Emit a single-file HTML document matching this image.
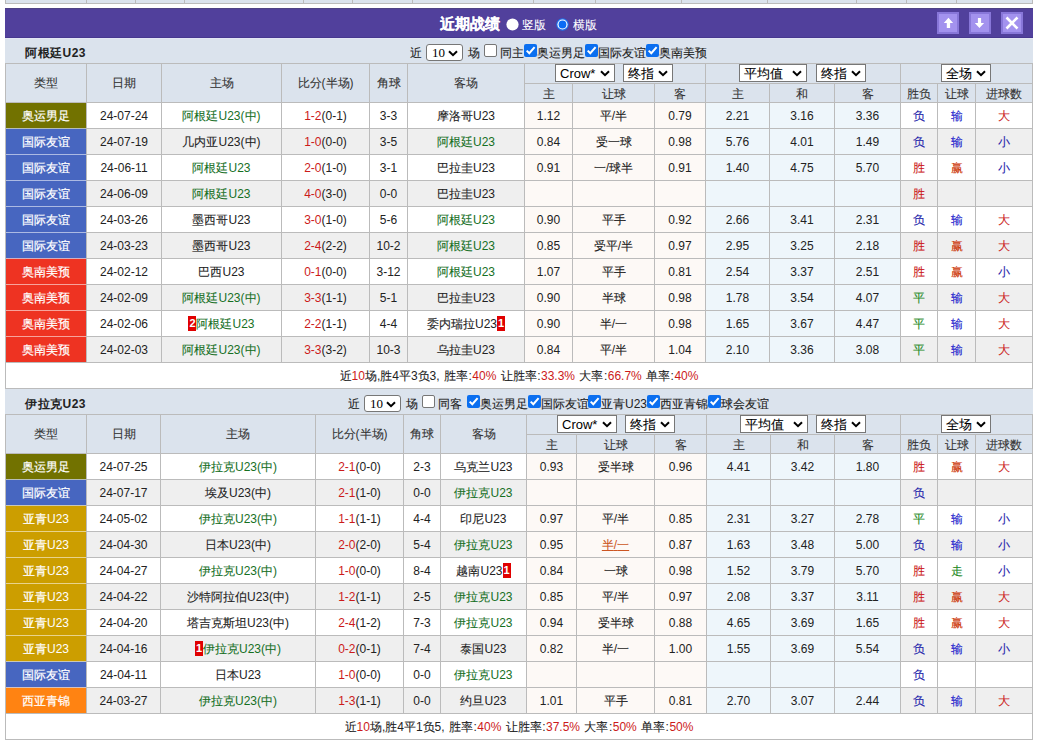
<!DOCTYPE html>
<html><head><meta charset="utf-8"><style>
html,body{margin:0;padding:0;background:#fff;width:1037px;height:743px;overflow:hidden;}
body{font-family:"Liberation Sans",sans-serif;font-size:12px;color:#333;position:relative;}
body>div{position:absolute;white-space:nowrap;overflow:visible;}
div div{position:absolute}
i{font-style:normal;-webkit-text-stroke:0.1px currentColor;}
b.n i{-webkit-text-stroke:0}
b.w{font-weight:normal}
b.t i{-webkit-text-stroke:0.2px #fff}
b.w i{-webkit-text-stroke:0.2px #fff}
.bd{display:inline-block;background:#e00000;color:#fff;width:8px;height:15px;line-height:15px;text-align:center;vertical-align:middle;font-size:11px;font-weight:bold;position:relative;top:-1px}
</style></head><body>
<div style="left:5px;top:0px;width:1028px;height:3px;background:#dbe3ed"></div>
<div style="left:5px;top:3px;width:1028px;height:1px;background:#bbbbbb"></div>
<div style="left:5px;top:0px;width:1px;height:4px;background:#bbbbbb"></div>
<div style="left:86px;top:0px;width:1px;height:4px;background:#bbbbbb"></div>
<div style="left:135px;top:0px;width:1px;height:4px;background:#bbbbbb"></div>
<div style="left:184px;top:0px;width:1px;height:4px;background:#bbbbbb"></div>
<div style="left:303px;top:0px;width:1px;height:4px;background:#bbbbbb"></div>
<div style="left:352px;top:0px;width:1px;height:4px;background:#bbbbbb"></div>
<div style="left:412px;top:0px;width:1px;height:4px;background:#bbbbbb"></div>
<div style="left:533px;top:0px;width:1px;height:4px;background:#bbbbbb"></div>
<div style="left:595px;top:0px;width:1px;height:4px;background:#bbbbbb"></div>
<div style="left:681px;top:0px;width:1px;height:4px;background:#bbbbbb"></div>
<div style="left:767px;top:0px;width:1px;height:4px;background:#bbbbbb"></div>
<div style="left:856px;top:0px;width:1px;height:4px;background:#bbbbbb"></div>
<div style="left:906px;top:0px;width:1px;height:4px;background:#bbbbbb"></div>
<div style="left:956px;top:0px;width:1px;height:4px;background:#bbbbbb"></div>
<div style="left:1032px;top:0px;width:1px;height:4px;background:#bbbbbb"></div>
<div style="left:5px;top:8px;width:1028px;height:30px;background:#51409c"></div>
<div style="left:5px;top:8px;width:1028px;height:1px;background:#4e4385"></div>
<div style="left:5px;top:37px;width:1028px;height:1px;background:#47388f"></div>
<div style="left:440px;top:9px;width:70px;height:30px;color:#fff;font-weight:bold;font-size:15px;line-height:30px"><b class=t><i>近期战绩</i></b></div>
<div style="left:506px;top:18px;width:13px;height:13px;"><svg width="13" height="13"><circle cx="6.5" cy="6.5" r="6.1" fill="#fff"/></svg></div>
<div style="left:522px;top:10px;width:30px;height:30px;color:#fff;line-height:30px"><i>竖版</i></div>
<div style="left:556px;top:18px;width:13px;height:13px;"><svg width="13" height="13"><circle cx="6.5" cy="6.5" r="6.2" fill="#1f6fe8"/><circle cx="6.5" cy="6.5" r="5.1" fill="#fff"/><circle cx="6.5" cy="6.5" r="3.9" fill="#0b6cf5"/></svg></div>
<div style="left:573px;top:10px;width:30px;height:30px;color:#fff;line-height:30px"><i>横版</i></div>
<div style="left:937px;top:12px;width:22px;height:22px;background:#a392ee;box-sizing:border-box;border:2px solid #8877d9"><svg width="22" height="22" style="position:absolute;left:-2px;top:-2px"><path d="M11.45 5.7 L16.1 10.9 L13.1 10.9 L13.1 16.1 L9.8 16.1 L9.8 10.9 L6.8 10.9 Z" fill="#fff"/></svg></div>
<div style="left:969px;top:12px;width:22px;height:22px;background:#a392ee;box-sizing:border-box;border:2px solid #8877d9"><svg width="22" height="22" style="position:absolute;left:-2px;top:-2px"><path d="M10.45 16.1 L15.1 11.1 L12.1 11.1 L12.1 6 L8.9 6 L8.9 11.1 L5.8 11.1 Z" fill="#fff"/></svg></div>
<div style="left:1001px;top:12px;width:22px;height:22px;background:#a392ee;box-sizing:border-box;border:2px solid #8877d9"><svg width="22" height="22" style="position:absolute;left:-2px;top:-2px"><path d="M5.5 5.5 L16.5 16.5 M16.5 5.5 L5.5 16.5" stroke="#fff" stroke-width="2.6"/></svg></div>
<div style="left:5px;top:38px;width:1028px;height:25px;background:#dbe3ed"></div>
<div style="left:5px;top:38px;width:1028px;height:1px;background:#e3e6f4"></div>
<div style="left:25px;top:41px;width:100px;height:25px;font-weight:bold;color:#222222;line-height:25px;letter-spacing:0.5px"><b class=n><i>阿根廷</i>U23</b></div>
<div style="left:410px;top:41px;width:14px;height:25px;color:#222222;line-height:25px"><i>近</i></div>
<div style="left:426px;top:44px;width:37px;height:17px;background:#fff;border:1px solid #777;box-sizing:border-box;border-radius:3px;font-size:13px;line-height:15px;color:#000;font-family:'Liberation Serif',serif;padding-left:5px"><span style="position:relative;top:0px">10</span><svg width="10" height="7" style="position:absolute;right:4px;top:5px"><path d="M1 1.2 L5 5.2 L9 1.2" stroke="#000" stroke-width="2" fill="none"/></svg></div>
<div style="left:468px;top:41px;width:14px;height:25px;color:#222222;line-height:25px"><i>场</i></div>
<div style="left:484px;top:44px;width:13px;height:13px;background:#fff;border:1px solid #767676;border-radius:2px;box-sizing:border-box"></div>
<div style="left:500px;top:41px;width:30px;height:25px;color:#222222;line-height:25px"><i>同主</i></div>
<div style="left:524px;top:44px;width:13px;height:13px;background:#0b6ff0;border-radius:2px"><svg width="13" height="13" style="position:absolute;left:0;top:0"><path d="M2.7 6.6 L5.3 9.2 L10.6 3.2" stroke="#fff" stroke-width="2" fill="none"/></svg></div>
<div style="left:537px;top:41px;width:80px;height:25px;color:#222222;line-height:25px;white-space:nowrap"><i>奥运男足</i></div>
<div style="left:585px;top:44px;width:13px;height:13px;background:#0b6ff0;border-radius:2px"><svg width="13" height="13" style="position:absolute;left:0;top:0"><path d="M2.7 6.6 L5.3 9.2 L10.6 3.2" stroke="#fff" stroke-width="2" fill="none"/></svg></div>
<div style="left:598px;top:41px;width:80px;height:25px;color:#222222;line-height:25px;white-space:nowrap"><i>国际友谊</i></div>
<div style="left:646px;top:44px;width:13px;height:13px;background:#0b6ff0;border-radius:2px"><svg width="13" height="13" style="position:absolute;left:0;top:0"><path d="M2.7 6.6 L5.3 9.2 L10.6 3.2" stroke="#fff" stroke-width="2" fill="none"/></svg></div>
<div style="left:659px;top:41px;width:80px;height:25px;color:#222222;line-height:25px;white-space:nowrap"><i>奥南美预</i></div>
<div style="left:5px;top:63px;width:1028px;height:39px;background:#dbe3ed"></div>
<div style="left:6px;top:103px;width:80px;height:25px;background:#727200"></div>
<div style="left:87px;top:103px;width:74px;height:25px;background:#ffffff"></div>
<div style="left:162px;top:103px;width:119px;height:25px;background:#ffffff"></div>
<div style="left:282px;top:103px;width:87px;height:25px;background:#ffffff"></div>
<div style="left:370px;top:103px;width:37px;height:25px;background:#ffffff"></div>
<div style="left:408px;top:103px;width:116px;height:25px;background:#ffffff"></div>
<div style="left:525px;top:103px;width:47px;height:25px;background:#fdf9f6"></div>
<div style="left:573px;top:103px;width:81px;height:25px;background:#fdf9f6"></div>
<div style="left:655px;top:103px;width:50px;height:25px;background:#fdf9f6"></div>
<div style="left:706px;top:103px;width:63px;height:25px;background:#eef6fb"></div>
<div style="left:770px;top:103px;width:64px;height:25px;background:#eef6fb"></div>
<div style="left:835px;top:103px;width:65px;height:25px;background:#eef6fb"></div>
<div style="left:901px;top:103px;width:36px;height:25px;background:#ffffff"></div>
<div style="left:938px;top:103px;width:37px;height:25px;background:#ffffff"></div>
<div style="left:976px;top:103px;width:56px;height:25px;background:#ffffff"></div>
<div style="left:6px;top:129px;width:80px;height:25px;background:#4766c0"></div>
<div style="left:87px;top:129px;width:74px;height:25px;background:#efefef"></div>
<div style="left:162px;top:129px;width:119px;height:25px;background:#efefef"></div>
<div style="left:282px;top:129px;width:87px;height:25px;background:#efefef"></div>
<div style="left:370px;top:129px;width:37px;height:25px;background:#efefef"></div>
<div style="left:408px;top:129px;width:116px;height:25px;background:#efefef"></div>
<div style="left:525px;top:129px;width:47px;height:25px;background:#fdf9f6"></div>
<div style="left:573px;top:129px;width:81px;height:25px;background:#fdf9f6"></div>
<div style="left:655px;top:129px;width:50px;height:25px;background:#fdf9f6"></div>
<div style="left:706px;top:129px;width:63px;height:25px;background:#eef6fb"></div>
<div style="left:770px;top:129px;width:64px;height:25px;background:#eef6fb"></div>
<div style="left:835px;top:129px;width:65px;height:25px;background:#eef6fb"></div>
<div style="left:901px;top:129px;width:36px;height:25px;background:#efefef"></div>
<div style="left:938px;top:129px;width:37px;height:25px;background:#efefef"></div>
<div style="left:976px;top:129px;width:56px;height:25px;background:#efefef"></div>
<div style="left:6px;top:155px;width:80px;height:25px;background:#4766c0"></div>
<div style="left:87px;top:155px;width:74px;height:25px;background:#ffffff"></div>
<div style="left:162px;top:155px;width:119px;height:25px;background:#ffffff"></div>
<div style="left:282px;top:155px;width:87px;height:25px;background:#ffffff"></div>
<div style="left:370px;top:155px;width:37px;height:25px;background:#ffffff"></div>
<div style="left:408px;top:155px;width:116px;height:25px;background:#ffffff"></div>
<div style="left:525px;top:155px;width:47px;height:25px;background:#fdf9f6"></div>
<div style="left:573px;top:155px;width:81px;height:25px;background:#fdf9f6"></div>
<div style="left:655px;top:155px;width:50px;height:25px;background:#fdf9f6"></div>
<div style="left:706px;top:155px;width:63px;height:25px;background:#eef6fb"></div>
<div style="left:770px;top:155px;width:64px;height:25px;background:#eef6fb"></div>
<div style="left:835px;top:155px;width:65px;height:25px;background:#eef6fb"></div>
<div style="left:901px;top:155px;width:36px;height:25px;background:#ffffff"></div>
<div style="left:938px;top:155px;width:37px;height:25px;background:#ffffff"></div>
<div style="left:976px;top:155px;width:56px;height:25px;background:#ffffff"></div>
<div style="left:6px;top:181px;width:80px;height:25px;background:#4766c0"></div>
<div style="left:87px;top:181px;width:74px;height:25px;background:#efefef"></div>
<div style="left:162px;top:181px;width:119px;height:25px;background:#efefef"></div>
<div style="left:282px;top:181px;width:87px;height:25px;background:#efefef"></div>
<div style="left:370px;top:181px;width:37px;height:25px;background:#efefef"></div>
<div style="left:408px;top:181px;width:116px;height:25px;background:#efefef"></div>
<div style="left:525px;top:181px;width:47px;height:25px;background:#fdf9f6"></div>
<div style="left:573px;top:181px;width:81px;height:25px;background:#fdf9f6"></div>
<div style="left:655px;top:181px;width:50px;height:25px;background:#fdf9f6"></div>
<div style="left:706px;top:181px;width:63px;height:25px;background:#eef6fb"></div>
<div style="left:770px;top:181px;width:64px;height:25px;background:#eef6fb"></div>
<div style="left:835px;top:181px;width:65px;height:25px;background:#eef6fb"></div>
<div style="left:901px;top:181px;width:36px;height:25px;background:#efefef"></div>
<div style="left:938px;top:181px;width:37px;height:25px;background:#efefef"></div>
<div style="left:976px;top:181px;width:56px;height:25px;background:#efefef"></div>
<div style="left:6px;top:207px;width:80px;height:25px;background:#4766c0"></div>
<div style="left:87px;top:207px;width:74px;height:25px;background:#ffffff"></div>
<div style="left:162px;top:207px;width:119px;height:25px;background:#ffffff"></div>
<div style="left:282px;top:207px;width:87px;height:25px;background:#ffffff"></div>
<div style="left:370px;top:207px;width:37px;height:25px;background:#ffffff"></div>
<div style="left:408px;top:207px;width:116px;height:25px;background:#ffffff"></div>
<div style="left:525px;top:207px;width:47px;height:25px;background:#fdf9f6"></div>
<div style="left:573px;top:207px;width:81px;height:25px;background:#fdf9f6"></div>
<div style="left:655px;top:207px;width:50px;height:25px;background:#fdf9f6"></div>
<div style="left:706px;top:207px;width:63px;height:25px;background:#eef6fb"></div>
<div style="left:770px;top:207px;width:64px;height:25px;background:#eef6fb"></div>
<div style="left:835px;top:207px;width:65px;height:25px;background:#eef6fb"></div>
<div style="left:901px;top:207px;width:36px;height:25px;background:#ffffff"></div>
<div style="left:938px;top:207px;width:37px;height:25px;background:#ffffff"></div>
<div style="left:976px;top:207px;width:56px;height:25px;background:#ffffff"></div>
<div style="left:6px;top:233px;width:80px;height:25px;background:#4766c0"></div>
<div style="left:87px;top:233px;width:74px;height:25px;background:#efefef"></div>
<div style="left:162px;top:233px;width:119px;height:25px;background:#efefef"></div>
<div style="left:282px;top:233px;width:87px;height:25px;background:#efefef"></div>
<div style="left:370px;top:233px;width:37px;height:25px;background:#efefef"></div>
<div style="left:408px;top:233px;width:116px;height:25px;background:#efefef"></div>
<div style="left:525px;top:233px;width:47px;height:25px;background:#fdf9f6"></div>
<div style="left:573px;top:233px;width:81px;height:25px;background:#fdf9f6"></div>
<div style="left:655px;top:233px;width:50px;height:25px;background:#fdf9f6"></div>
<div style="left:706px;top:233px;width:63px;height:25px;background:#eef6fb"></div>
<div style="left:770px;top:233px;width:64px;height:25px;background:#eef6fb"></div>
<div style="left:835px;top:233px;width:65px;height:25px;background:#eef6fb"></div>
<div style="left:901px;top:233px;width:36px;height:25px;background:#efefef"></div>
<div style="left:938px;top:233px;width:37px;height:25px;background:#efefef"></div>
<div style="left:976px;top:233px;width:56px;height:25px;background:#efefef"></div>
<div style="left:6px;top:259px;width:80px;height:25px;background:#ee3322"></div>
<div style="left:87px;top:259px;width:74px;height:25px;background:#ffffff"></div>
<div style="left:162px;top:259px;width:119px;height:25px;background:#ffffff"></div>
<div style="left:282px;top:259px;width:87px;height:25px;background:#ffffff"></div>
<div style="left:370px;top:259px;width:37px;height:25px;background:#ffffff"></div>
<div style="left:408px;top:259px;width:116px;height:25px;background:#ffffff"></div>
<div style="left:525px;top:259px;width:47px;height:25px;background:#fdf9f6"></div>
<div style="left:573px;top:259px;width:81px;height:25px;background:#fdf9f6"></div>
<div style="left:655px;top:259px;width:50px;height:25px;background:#fdf9f6"></div>
<div style="left:706px;top:259px;width:63px;height:25px;background:#eef6fb"></div>
<div style="left:770px;top:259px;width:64px;height:25px;background:#eef6fb"></div>
<div style="left:835px;top:259px;width:65px;height:25px;background:#eef6fb"></div>
<div style="left:901px;top:259px;width:36px;height:25px;background:#ffffff"></div>
<div style="left:938px;top:259px;width:37px;height:25px;background:#ffffff"></div>
<div style="left:976px;top:259px;width:56px;height:25px;background:#ffffff"></div>
<div style="left:6px;top:285px;width:80px;height:25px;background:#ee3322"></div>
<div style="left:87px;top:285px;width:74px;height:25px;background:#efefef"></div>
<div style="left:162px;top:285px;width:119px;height:25px;background:#efefef"></div>
<div style="left:282px;top:285px;width:87px;height:25px;background:#efefef"></div>
<div style="left:370px;top:285px;width:37px;height:25px;background:#efefef"></div>
<div style="left:408px;top:285px;width:116px;height:25px;background:#efefef"></div>
<div style="left:525px;top:285px;width:47px;height:25px;background:#fdf9f6"></div>
<div style="left:573px;top:285px;width:81px;height:25px;background:#fdf9f6"></div>
<div style="left:655px;top:285px;width:50px;height:25px;background:#fdf9f6"></div>
<div style="left:706px;top:285px;width:63px;height:25px;background:#eef6fb"></div>
<div style="left:770px;top:285px;width:64px;height:25px;background:#eef6fb"></div>
<div style="left:835px;top:285px;width:65px;height:25px;background:#eef6fb"></div>
<div style="left:901px;top:285px;width:36px;height:25px;background:#efefef"></div>
<div style="left:938px;top:285px;width:37px;height:25px;background:#efefef"></div>
<div style="left:976px;top:285px;width:56px;height:25px;background:#efefef"></div>
<div style="left:6px;top:311px;width:80px;height:25px;background:#ee3322"></div>
<div style="left:87px;top:311px;width:74px;height:25px;background:#ffffff"></div>
<div style="left:162px;top:311px;width:119px;height:25px;background:#ffffff"></div>
<div style="left:282px;top:311px;width:87px;height:25px;background:#ffffff"></div>
<div style="left:370px;top:311px;width:37px;height:25px;background:#ffffff"></div>
<div style="left:408px;top:311px;width:116px;height:25px;background:#ffffff"></div>
<div style="left:525px;top:311px;width:47px;height:25px;background:#fdf9f6"></div>
<div style="left:573px;top:311px;width:81px;height:25px;background:#fdf9f6"></div>
<div style="left:655px;top:311px;width:50px;height:25px;background:#fdf9f6"></div>
<div style="left:706px;top:311px;width:63px;height:25px;background:#eef6fb"></div>
<div style="left:770px;top:311px;width:64px;height:25px;background:#eef6fb"></div>
<div style="left:835px;top:311px;width:65px;height:25px;background:#eef6fb"></div>
<div style="left:901px;top:311px;width:36px;height:25px;background:#ffffff"></div>
<div style="left:938px;top:311px;width:37px;height:25px;background:#ffffff"></div>
<div style="left:976px;top:311px;width:56px;height:25px;background:#ffffff"></div>
<div style="left:6px;top:337px;width:80px;height:25px;background:#ee3322"></div>
<div style="left:87px;top:337px;width:74px;height:25px;background:#efefef"></div>
<div style="left:162px;top:337px;width:119px;height:25px;background:#efefef"></div>
<div style="left:282px;top:337px;width:87px;height:25px;background:#efefef"></div>
<div style="left:370px;top:337px;width:37px;height:25px;background:#efefef"></div>
<div style="left:408px;top:337px;width:116px;height:25px;background:#efefef"></div>
<div style="left:525px;top:337px;width:47px;height:25px;background:#fdf9f6"></div>
<div style="left:573px;top:337px;width:81px;height:25px;background:#fdf9f6"></div>
<div style="left:655px;top:337px;width:50px;height:25px;background:#fdf9f6"></div>
<div style="left:706px;top:337px;width:63px;height:25px;background:#eef6fb"></div>
<div style="left:770px;top:337px;width:64px;height:25px;background:#eef6fb"></div>
<div style="left:835px;top:337px;width:65px;height:25px;background:#eef6fb"></div>
<div style="left:901px;top:337px;width:36px;height:25px;background:#efefef"></div>
<div style="left:938px;top:337px;width:37px;height:25px;background:#efefef"></div>
<div style="left:976px;top:337px;width:56px;height:25px;background:#efefef"></div>
<div style="left:5px;top:362px;width:1028px;height:27px;background:#fff"></div>
<div style="left:5px;top:63px;width:1028px;height:1px;background:#bbbbbb"></div>
<div style="left:524px;top:83px;width:509px;height:1px;background:#bbbbbb"></div>
<div style="left:5px;top:102px;width:1028px;height:1px;background:#bbbbbb"></div>
<div style="left:5px;top:128px;width:1028px;height:1px;background:#bbbbbb"></div>
<div style="left:5px;top:154px;width:1028px;height:1px;background:#bbbbbb"></div>
<div style="left:5px;top:180px;width:1028px;height:1px;background:#bbbbbb"></div>
<div style="left:5px;top:206px;width:1028px;height:1px;background:#bbbbbb"></div>
<div style="left:5px;top:232px;width:1028px;height:1px;background:#bbbbbb"></div>
<div style="left:5px;top:258px;width:1028px;height:1px;background:#bbbbbb"></div>
<div style="left:5px;top:284px;width:1028px;height:1px;background:#bbbbbb"></div>
<div style="left:5px;top:310px;width:1028px;height:1px;background:#bbbbbb"></div>
<div style="left:5px;top:336px;width:1028px;height:1px;background:#bbbbbb"></div>
<div style="left:5px;top:362px;width:1028px;height:1px;background:#bbbbbb"></div>
<div style="left:5px;top:388px;width:1028px;height:1px;background:#bbbbbb"></div>
<div style="left:5px;top:63px;width:1px;height:326px;background:#bbbbbb"></div>
<div style="left:86px;top:63px;width:1px;height:300px;background:#bbbbbb"></div>
<div style="left:161px;top:63px;width:1px;height:300px;background:#bbbbbb"></div>
<div style="left:281px;top:63px;width:1px;height:300px;background:#bbbbbb"></div>
<div style="left:369px;top:63px;width:1px;height:300px;background:#bbbbbb"></div>
<div style="left:407px;top:63px;width:1px;height:300px;background:#bbbbbb"></div>
<div style="left:524px;top:63px;width:1px;height:300px;background:#bbbbbb"></div>
<div style="left:572px;top:83px;width:1px;height:280px;background:#bbbbbb"></div>
<div style="left:654px;top:83px;width:1px;height:280px;background:#bbbbbb"></div>
<div style="left:705px;top:63px;width:1px;height:300px;background:#bbbbbb"></div>
<div style="left:769px;top:83px;width:1px;height:280px;background:#bbbbbb"></div>
<div style="left:834px;top:83px;width:1px;height:280px;background:#bbbbbb"></div>
<div style="left:900px;top:63px;width:1px;height:300px;background:#bbbbbb"></div>
<div style="left:937px;top:83px;width:1px;height:280px;background:#bbbbbb"></div>
<div style="left:975px;top:83px;width:1px;height:280px;background:#bbbbbb"></div>
<div style="left:1032px;top:63px;width:1px;height:326px;background:#bbbbbb"></div>
<div style="left:6px;top:128px;width:80px;height:1px;background:#b6bdb7"></div>
<div style="left:6px;top:154px;width:80px;height:1px;background:#acbae3"></div>
<div style="left:6px;top:180px;width:80px;height:1px;background:#acbae3"></div>
<div style="left:6px;top:206px;width:80px;height:1px;background:#acbae3"></div>
<div style="left:6px;top:232px;width:80px;height:1px;background:#acbae3"></div>
<div style="left:6px;top:258px;width:80px;height:1px;background:#d2afbf"></div>
<div style="left:6px;top:284px;width:80px;height:1px;background:#f7a39c"></div>
<div style="left:6px;top:310px;width:80px;height:1px;background:#f7a39c"></div>
<div style="left:6px;top:336px;width:80px;height:1px;background:#f7a39c"></div>
<div style="left:6px;top:64px;width:80px;height:38px;line-height:39px;text-align:center;color:#333"><i>类型</i></div>
<div style="left:87px;top:64px;width:74px;height:38px;line-height:39px;text-align:center;color:#333"><i>日期</i></div>
<div style="left:162px;top:64px;width:119px;height:38px;line-height:39px;text-align:center;color:#333"><i>主场</i></div>
<div style="left:282px;top:64px;width:87px;height:38px;line-height:39px;text-align:center;color:#333"><i>比分</i>(<i>半场</i>)</div>
<div style="left:370px;top:64px;width:37px;height:38px;line-height:39px;text-align:center;color:#333"><i>角球</i></div>
<div style="left:408px;top:64px;width:116px;height:38px;line-height:39px;text-align:center;color:#333"><i>客场</i></div>
<div style="left:525px;top:85px;width:47px;height:17px;line-height:18px;text-align:center;color:#333"><i>主</i></div>
<div style="left:573px;top:85px;width:81px;height:17px;line-height:18px;text-align:center;color:#333"><i>让球</i></div>
<div style="left:655px;top:85px;width:50px;height:17px;line-height:18px;text-align:center;color:#333"><i>客</i></div>
<div style="left:706px;top:85px;width:63px;height:17px;line-height:18px;text-align:center;color:#333"><i>主</i></div>
<div style="left:770px;top:85px;width:64px;height:17px;line-height:18px;text-align:center;color:#333"><i>和</i></div>
<div style="left:835px;top:85px;width:65px;height:17px;line-height:18px;text-align:center;color:#333"><i>客</i></div>
<div style="left:901px;top:85px;width:36px;height:17px;line-height:18px;text-align:center;color:#333"><i>胜负</i></div>
<div style="left:938px;top:85px;width:37px;height:17px;line-height:18px;text-align:center;color:#333"><i>让球</i></div>
<div style="left:976px;top:85px;width:56px;height:17px;line-height:18px;text-align:center;color:#333"><i>进球数</i></div>
<div style="left:555px;top:64px;width:60px;height:18px;background:#fff;border:1px solid #777;box-sizing:border-box;font-size:13px;line-height:16px;color:#000;padding-left:4px"><span style="position:relative;top:1px">Crow*</span><svg width="10" height="7" style="position:absolute;right:4px;top:5px"><path d="M1 1.2 L5 5.2 L9 1.2" stroke="#000" stroke-width="2" fill="none"/></svg></div>
<div style="left:623px;top:64px;width:50px;height:18px;background:#fff;border:1px solid #777;box-sizing:border-box;font-size:13px;line-height:16px;color:#000;padding-left:4px"><span style="position:relative;top:1px"><i>终指</i></span><svg width="10" height="7" style="position:absolute;right:4px;top:5px"><path d="M1 1.2 L5 5.2 L9 1.2" stroke="#000" stroke-width="2" fill="none"/></svg></div>
<div style="left:739px;top:64px;width:68px;height:18px;background:#fff;border:1px solid #777;box-sizing:border-box;font-size:13px;line-height:16px;color:#000;padding-left:4px"><span style="position:relative;top:1px"><i>平均值</i></span><svg width="10" height="7" style="position:absolute;right:4px;top:5px"><path d="M1 1.2 L5 5.2 L9 1.2" stroke="#000" stroke-width="2" fill="none"/></svg></div>
<div style="left:816px;top:64px;width:50px;height:18px;background:#fff;border:1px solid #777;box-sizing:border-box;font-size:13px;line-height:16px;color:#000;padding-left:4px"><span style="position:relative;top:1px"><i>终指</i></span><svg width="10" height="7" style="position:absolute;right:4px;top:5px"><path d="M1 1.2 L5 5.2 L9 1.2" stroke="#000" stroke-width="2" fill="none"/></svg></div>
<div style="left:941px;top:64px;width:50px;height:18px;background:#fff;border:1px solid #777;box-sizing:border-box;font-size:13px;line-height:16px;color:#000;padding-left:4px"><span style="position:relative;top:1px"><i>全场</i></span><svg width="10" height="7" style="position:absolute;right:4px;top:5px"><path d="M1 1.2 L5 5.2 L9 1.2" stroke="#000" stroke-width="2" fill="none"/></svg></div>
<div style="left:6px;top:103px;width:80px;height:25px;line-height:26px;text-align:center;color:#fff"><b class=w><i>奥运男足</i></b></div>
<div style="left:87px;top:103px;width:74px;height:25px;line-height:26px;text-align:center;color:#222222">24-07-24</div>
<div style="left:162px;top:103px;width:119px;height:25px;line-height:26px;text-align:center;color:#222222"><span style="color:#16701f"><i>阿根廷</i>U23(<i>中</i>)</span></div>
<div style="left:282px;top:103px;width:87px;height:25px;line-height:26px;text-align:center;color:#222222"><span style="color:#cc1a1a">1-2</span>(0-1)</div>
<div style="left:370px;top:103px;width:37px;height:25px;line-height:26px;text-align:center;color:#222222">3-3</div>
<div style="left:408px;top:103px;width:116px;height:25px;line-height:26px;text-align:center;color:#222222"><i>摩洛哥</i>U23</div>
<div style="left:525px;top:103px;width:47px;height:25px;line-height:26px;text-align:center;color:#222222">1.12</div>
<div style="left:573px;top:103px;width:81px;height:25px;line-height:26px;text-align:center;color:#222222"><i>平</i>/<i>半</i></div>
<div style="left:655px;top:103px;width:50px;height:25px;line-height:26px;text-align:center;color:#222222">0.79</div>
<div style="left:706px;top:103px;width:63px;height:25px;line-height:26px;text-align:center;color:#222222">2.21</div>
<div style="left:770px;top:103px;width:64px;height:25px;line-height:26px;text-align:center;color:#222222">3.16</div>
<div style="left:835px;top:103px;width:65px;height:25px;line-height:26px;text-align:center;color:#222222">3.36</div>
<div style="left:901px;top:103px;width:36px;height:25px;line-height:26px;text-align:center;color:#2222aa"><i>负</i></div>
<div style="left:938px;top:103px;width:37px;height:25px;line-height:26px;text-align:center;color:#1a1acc"><i>输</i></div>
<div style="left:976px;top:103px;width:56px;height:25px;line-height:26px;text-align:center;color:#cc1a1a"><i>大</i></div>
<div style="left:6px;top:129px;width:80px;height:25px;line-height:26px;text-align:center;color:#fff"><b class=w><i>国际友谊</i></b></div>
<div style="left:87px;top:129px;width:74px;height:25px;line-height:26px;text-align:center;color:#222222">24-07-19</div>
<div style="left:162px;top:129px;width:119px;height:25px;line-height:26px;text-align:center;color:#222222"><i>几内亚</i>U23(<i>中</i>)</div>
<div style="left:282px;top:129px;width:87px;height:25px;line-height:26px;text-align:center;color:#222222"><span style="color:#cc1a1a">1-0</span>(0-0)</div>
<div style="left:370px;top:129px;width:37px;height:25px;line-height:26px;text-align:center;color:#222222">3-5</div>
<div style="left:408px;top:129px;width:116px;height:25px;line-height:26px;text-align:center;color:#222222"><span style="color:#16701f"><i>阿根廷</i>U23</span></div>
<div style="left:525px;top:129px;width:47px;height:25px;line-height:26px;text-align:center;color:#222222">0.84</div>
<div style="left:573px;top:129px;width:81px;height:25px;line-height:26px;text-align:center;color:#222222"><i>受一球</i></div>
<div style="left:655px;top:129px;width:50px;height:25px;line-height:26px;text-align:center;color:#222222">0.98</div>
<div style="left:706px;top:129px;width:63px;height:25px;line-height:26px;text-align:center;color:#222222">5.76</div>
<div style="left:770px;top:129px;width:64px;height:25px;line-height:26px;text-align:center;color:#222222">4.01</div>
<div style="left:835px;top:129px;width:65px;height:25px;line-height:26px;text-align:center;color:#222222">1.49</div>
<div style="left:901px;top:129px;width:36px;height:25px;line-height:26px;text-align:center;color:#2222aa"><i>负</i></div>
<div style="left:938px;top:129px;width:37px;height:25px;line-height:26px;text-align:center;color:#1a1acc"><i>输</i></div>
<div style="left:976px;top:129px;width:56px;height:25px;line-height:26px;text-align:center;color:#2222aa"><i>小</i></div>
<div style="left:6px;top:155px;width:80px;height:25px;line-height:26px;text-align:center;color:#fff"><b class=w><i>国际友谊</i></b></div>
<div style="left:87px;top:155px;width:74px;height:25px;line-height:26px;text-align:center;color:#222222">24-06-11</div>
<div style="left:162px;top:155px;width:119px;height:25px;line-height:26px;text-align:center;color:#222222"><span style="color:#16701f"><i>阿根廷</i>U23</span></div>
<div style="left:282px;top:155px;width:87px;height:25px;line-height:26px;text-align:center;color:#222222"><span style="color:#cc1a1a">2-0</span>(1-0)</div>
<div style="left:370px;top:155px;width:37px;height:25px;line-height:26px;text-align:center;color:#222222">3-1</div>
<div style="left:408px;top:155px;width:116px;height:25px;line-height:26px;text-align:center;color:#222222"><i>巴拉圭</i>U23</div>
<div style="left:525px;top:155px;width:47px;height:25px;line-height:26px;text-align:center;color:#222222">0.91</div>
<div style="left:573px;top:155px;width:81px;height:25px;line-height:26px;text-align:center;color:#222222"><i>一</i>/<i>球半</i></div>
<div style="left:655px;top:155px;width:50px;height:25px;line-height:26px;text-align:center;color:#222222">0.91</div>
<div style="left:706px;top:155px;width:63px;height:25px;line-height:26px;text-align:center;color:#222222">1.40</div>
<div style="left:770px;top:155px;width:64px;height:25px;line-height:26px;text-align:center;color:#222222">4.75</div>
<div style="left:835px;top:155px;width:65px;height:25px;line-height:26px;text-align:center;color:#222222">5.70</div>
<div style="left:901px;top:155px;width:36px;height:25px;line-height:26px;text-align:center;color:#cc1a1a"><i>胜</i></div>
<div style="left:938px;top:155px;width:37px;height:25px;line-height:26px;text-align:center;color:#cc3300"><i>赢</i></div>
<div style="left:976px;top:155px;width:56px;height:25px;line-height:26px;text-align:center;color:#2222aa"><i>小</i></div>
<div style="left:6px;top:181px;width:80px;height:25px;line-height:26px;text-align:center;color:#fff"><b class=w><i>国际友谊</i></b></div>
<div style="left:87px;top:181px;width:74px;height:25px;line-height:26px;text-align:center;color:#222222">24-06-09</div>
<div style="left:162px;top:181px;width:119px;height:25px;line-height:26px;text-align:center;color:#222222"><span style="color:#16701f"><i>阿根廷</i>U23</span></div>
<div style="left:282px;top:181px;width:87px;height:25px;line-height:26px;text-align:center;color:#222222"><span style="color:#cc1a1a">4-0</span>(3-0)</div>
<div style="left:370px;top:181px;width:37px;height:25px;line-height:26px;text-align:center;color:#222222">0-0</div>
<div style="left:408px;top:181px;width:116px;height:25px;line-height:26px;text-align:center;color:#222222"><i>巴拉圭</i>U23</div>
<div style="left:525px;top:181px;width:47px;height:25px;line-height:26px;text-align:center;color:#222222"></div>
<div style="left:573px;top:181px;width:81px;height:25px;line-height:26px;text-align:center;color:#222222"></div>
<div style="left:655px;top:181px;width:50px;height:25px;line-height:26px;text-align:center;color:#222222"></div>
<div style="left:706px;top:181px;width:63px;height:25px;line-height:26px;text-align:center;color:#222222"></div>
<div style="left:770px;top:181px;width:64px;height:25px;line-height:26px;text-align:center;color:#222222"></div>
<div style="left:835px;top:181px;width:65px;height:25px;line-height:26px;text-align:center;color:#222222"></div>
<div style="left:901px;top:181px;width:36px;height:25px;line-height:26px;text-align:center;color:#cc1a1a"><i>胜</i></div>
<div style="left:938px;top:181px;width:37px;height:25px;line-height:26px;text-align:center;color:#222222"></div>
<div style="left:976px;top:181px;width:56px;height:25px;line-height:26px;text-align:center;color:#222222"></div>
<div style="left:6px;top:207px;width:80px;height:25px;line-height:26px;text-align:center;color:#fff"><b class=w><i>国际友谊</i></b></div>
<div style="left:87px;top:207px;width:74px;height:25px;line-height:26px;text-align:center;color:#222222">24-03-26</div>
<div style="left:162px;top:207px;width:119px;height:25px;line-height:26px;text-align:center;color:#222222"><i>墨西哥</i>U23</div>
<div style="left:282px;top:207px;width:87px;height:25px;line-height:26px;text-align:center;color:#222222"><span style="color:#cc1a1a">3-0</span>(1-0)</div>
<div style="left:370px;top:207px;width:37px;height:25px;line-height:26px;text-align:center;color:#222222">5-6</div>
<div style="left:408px;top:207px;width:116px;height:25px;line-height:26px;text-align:center;color:#222222"><span style="color:#16701f"><i>阿根廷</i>U23</span></div>
<div style="left:525px;top:207px;width:47px;height:25px;line-height:26px;text-align:center;color:#222222">0.90</div>
<div style="left:573px;top:207px;width:81px;height:25px;line-height:26px;text-align:center;color:#222222"><i>平手</i></div>
<div style="left:655px;top:207px;width:50px;height:25px;line-height:26px;text-align:center;color:#222222">0.92</div>
<div style="left:706px;top:207px;width:63px;height:25px;line-height:26px;text-align:center;color:#222222">2.66</div>
<div style="left:770px;top:207px;width:64px;height:25px;line-height:26px;text-align:center;color:#222222">3.41</div>
<div style="left:835px;top:207px;width:65px;height:25px;line-height:26px;text-align:center;color:#222222">2.31</div>
<div style="left:901px;top:207px;width:36px;height:25px;line-height:26px;text-align:center;color:#2222aa"><i>负</i></div>
<div style="left:938px;top:207px;width:37px;height:25px;line-height:26px;text-align:center;color:#1a1acc"><i>输</i></div>
<div style="left:976px;top:207px;width:56px;height:25px;line-height:26px;text-align:center;color:#cc1a1a"><i>大</i></div>
<div style="left:6px;top:233px;width:80px;height:25px;line-height:26px;text-align:center;color:#fff"><b class=w><i>国际友谊</i></b></div>
<div style="left:87px;top:233px;width:74px;height:25px;line-height:26px;text-align:center;color:#222222">24-03-23</div>
<div style="left:162px;top:233px;width:119px;height:25px;line-height:26px;text-align:center;color:#222222"><i>墨西哥</i>U23</div>
<div style="left:282px;top:233px;width:87px;height:25px;line-height:26px;text-align:center;color:#222222"><span style="color:#cc1a1a">2-4</span>(2-2)</div>
<div style="left:370px;top:233px;width:37px;height:25px;line-height:26px;text-align:center;color:#222222">10-2</div>
<div style="left:408px;top:233px;width:116px;height:25px;line-height:26px;text-align:center;color:#222222"><span style="color:#16701f"><i>阿根廷</i>U23</span></div>
<div style="left:525px;top:233px;width:47px;height:25px;line-height:26px;text-align:center;color:#222222">0.85</div>
<div style="left:573px;top:233px;width:81px;height:25px;line-height:26px;text-align:center;color:#222222"><i>受平</i>/<i>半</i></div>
<div style="left:655px;top:233px;width:50px;height:25px;line-height:26px;text-align:center;color:#222222">0.97</div>
<div style="left:706px;top:233px;width:63px;height:25px;line-height:26px;text-align:center;color:#222222">2.95</div>
<div style="left:770px;top:233px;width:64px;height:25px;line-height:26px;text-align:center;color:#222222">3.25</div>
<div style="left:835px;top:233px;width:65px;height:25px;line-height:26px;text-align:center;color:#222222">2.18</div>
<div style="left:901px;top:233px;width:36px;height:25px;line-height:26px;text-align:center;color:#cc1a1a"><i>胜</i></div>
<div style="left:938px;top:233px;width:37px;height:25px;line-height:26px;text-align:center;color:#cc3300"><i>赢</i></div>
<div style="left:976px;top:233px;width:56px;height:25px;line-height:26px;text-align:center;color:#cc1a1a"><i>大</i></div>
<div style="left:6px;top:259px;width:80px;height:25px;line-height:26px;text-align:center;color:#fff"><b class=w><i>奥南美预</i></b></div>
<div style="left:87px;top:259px;width:74px;height:25px;line-height:26px;text-align:center;color:#222222">24-02-12</div>
<div style="left:162px;top:259px;width:119px;height:25px;line-height:26px;text-align:center;color:#222222"><i>巴西</i>U23</div>
<div style="left:282px;top:259px;width:87px;height:25px;line-height:26px;text-align:center;color:#222222"><span style="color:#cc1a1a">0-1</span>(0-0)</div>
<div style="left:370px;top:259px;width:37px;height:25px;line-height:26px;text-align:center;color:#222222">3-12</div>
<div style="left:408px;top:259px;width:116px;height:25px;line-height:26px;text-align:center;color:#222222"><span style="color:#16701f"><i>阿根廷</i>U23</span></div>
<div style="left:525px;top:259px;width:47px;height:25px;line-height:26px;text-align:center;color:#222222">1.07</div>
<div style="left:573px;top:259px;width:81px;height:25px;line-height:26px;text-align:center;color:#222222"><i>平手</i></div>
<div style="left:655px;top:259px;width:50px;height:25px;line-height:26px;text-align:center;color:#222222">0.81</div>
<div style="left:706px;top:259px;width:63px;height:25px;line-height:26px;text-align:center;color:#222222">2.54</div>
<div style="left:770px;top:259px;width:64px;height:25px;line-height:26px;text-align:center;color:#222222">3.37</div>
<div style="left:835px;top:259px;width:65px;height:25px;line-height:26px;text-align:center;color:#222222">2.51</div>
<div style="left:901px;top:259px;width:36px;height:25px;line-height:26px;text-align:center;color:#cc1a1a"><i>胜</i></div>
<div style="left:938px;top:259px;width:37px;height:25px;line-height:26px;text-align:center;color:#cc3300"><i>赢</i></div>
<div style="left:976px;top:259px;width:56px;height:25px;line-height:26px;text-align:center;color:#2222aa"><i>小</i></div>
<div style="left:6px;top:285px;width:80px;height:25px;line-height:26px;text-align:center;color:#fff"><b class=w><i>奥南美预</i></b></div>
<div style="left:87px;top:285px;width:74px;height:25px;line-height:26px;text-align:center;color:#222222">24-02-09</div>
<div style="left:162px;top:285px;width:119px;height:25px;line-height:26px;text-align:center;color:#222222"><span style="color:#16701f"><i>阿根廷</i>U23(<i>中</i>)</span></div>
<div style="left:282px;top:285px;width:87px;height:25px;line-height:26px;text-align:center;color:#222222"><span style="color:#cc1a1a">3-3</span>(1-1)</div>
<div style="left:370px;top:285px;width:37px;height:25px;line-height:26px;text-align:center;color:#222222">5-1</div>
<div style="left:408px;top:285px;width:116px;height:25px;line-height:26px;text-align:center;color:#222222"><i>巴拉圭</i>U23</div>
<div style="left:525px;top:285px;width:47px;height:25px;line-height:26px;text-align:center;color:#222222">0.90</div>
<div style="left:573px;top:285px;width:81px;height:25px;line-height:26px;text-align:center;color:#222222"><i>半球</i></div>
<div style="left:655px;top:285px;width:50px;height:25px;line-height:26px;text-align:center;color:#222222">0.98</div>
<div style="left:706px;top:285px;width:63px;height:25px;line-height:26px;text-align:center;color:#222222">1.78</div>
<div style="left:770px;top:285px;width:64px;height:25px;line-height:26px;text-align:center;color:#222222">3.54</div>
<div style="left:835px;top:285px;width:65px;height:25px;line-height:26px;text-align:center;color:#222222">4.07</div>
<div style="left:901px;top:285px;width:36px;height:25px;line-height:26px;text-align:center;color:#228822"><i>平</i></div>
<div style="left:938px;top:285px;width:37px;height:25px;line-height:26px;text-align:center;color:#1a1acc"><i>输</i></div>
<div style="left:976px;top:285px;width:56px;height:25px;line-height:26px;text-align:center;color:#cc1a1a"><i>大</i></div>
<div style="left:6px;top:311px;width:80px;height:25px;line-height:26px;text-align:center;color:#fff"><b class=w><i>奥南美预</i></b></div>
<div style="left:87px;top:311px;width:74px;height:25px;line-height:26px;text-align:center;color:#222222">24-02-06</div>
<div style="left:162px;top:311px;width:119px;height:25px;line-height:26px;text-align:center;color:#222222"><span class="bd">2</span><span style="color:#16701f"><i>阿根廷</i>U23</span></div>
<div style="left:282px;top:311px;width:87px;height:25px;line-height:26px;text-align:center;color:#222222"><span style="color:#cc1a1a">2-2</span>(1-1)</div>
<div style="left:370px;top:311px;width:37px;height:25px;line-height:26px;text-align:center;color:#222222">4-4</div>
<div style="left:408px;top:311px;width:116px;height:25px;line-height:26px;text-align:center;color:#222222"><i>委内瑞拉</i>U23<span class="bd">1</span></div>
<div style="left:525px;top:311px;width:47px;height:25px;line-height:26px;text-align:center;color:#222222">0.90</div>
<div style="left:573px;top:311px;width:81px;height:25px;line-height:26px;text-align:center;color:#222222"><i>半</i>/<i>一</i></div>
<div style="left:655px;top:311px;width:50px;height:25px;line-height:26px;text-align:center;color:#222222">0.98</div>
<div style="left:706px;top:311px;width:63px;height:25px;line-height:26px;text-align:center;color:#222222">1.65</div>
<div style="left:770px;top:311px;width:64px;height:25px;line-height:26px;text-align:center;color:#222222">3.67</div>
<div style="left:835px;top:311px;width:65px;height:25px;line-height:26px;text-align:center;color:#222222">4.47</div>
<div style="left:901px;top:311px;width:36px;height:25px;line-height:26px;text-align:center;color:#228822"><i>平</i></div>
<div style="left:938px;top:311px;width:37px;height:25px;line-height:26px;text-align:center;color:#1a1acc"><i>输</i></div>
<div style="left:976px;top:311px;width:56px;height:25px;line-height:26px;text-align:center;color:#cc1a1a"><i>大</i></div>
<div style="left:6px;top:337px;width:80px;height:25px;line-height:26px;text-align:center;color:#fff"><b class=w><i>奥南美预</i></b></div>
<div style="left:87px;top:337px;width:74px;height:25px;line-height:26px;text-align:center;color:#222222">24-02-03</div>
<div style="left:162px;top:337px;width:119px;height:25px;line-height:26px;text-align:center;color:#222222"><span style="color:#16701f"><i>阿根廷</i>U23(<i>中</i>)</span></div>
<div style="left:282px;top:337px;width:87px;height:25px;line-height:26px;text-align:center;color:#222222"><span style="color:#cc1a1a">3-3</span>(3-2)</div>
<div style="left:370px;top:337px;width:37px;height:25px;line-height:26px;text-align:center;color:#222222">10-3</div>
<div style="left:408px;top:337px;width:116px;height:25px;line-height:26px;text-align:center;color:#222222"><i>乌拉圭</i>U23</div>
<div style="left:525px;top:337px;width:47px;height:25px;line-height:26px;text-align:center;color:#222222">0.84</div>
<div style="left:573px;top:337px;width:81px;height:25px;line-height:26px;text-align:center;color:#222222"><i>平</i>/<i>半</i></div>
<div style="left:655px;top:337px;width:50px;height:25px;line-height:26px;text-align:center;color:#222222">1.04</div>
<div style="left:706px;top:337px;width:63px;height:25px;line-height:26px;text-align:center;color:#222222">2.10</div>
<div style="left:770px;top:337px;width:64px;height:25px;line-height:26px;text-align:center;color:#222222">3.36</div>
<div style="left:835px;top:337px;width:65px;height:25px;line-height:26px;text-align:center;color:#222222">3.08</div>
<div style="left:901px;top:337px;width:36px;height:25px;line-height:26px;text-align:center;color:#228822"><i>平</i></div>
<div style="left:938px;top:337px;width:37px;height:25px;line-height:26px;text-align:center;color:#1a1acc"><i>输</i></div>
<div style="left:976px;top:337px;width:56px;height:25px;line-height:26px;text-align:center;color:#cc1a1a"><i>大</i></div>
<div style="left:6px;top:363px;width:1026px;height:25px;line-height:26px;text-align:center;color:#222222;word-spacing:1px"><i>近</i><span style="color:#cc1a1a">10</span><i>场</i>,<i>胜</i>4<i>平</i>3<i>负</i>3, <i>胜率</i><span style="margin:0 .5px">:</span><span style="color:#cc1a1a">40%</span> <i>让胜率</i><span style="margin:0 .5px">:</span><span style="color:#cc1a1a">33.3%</span> <i>大率</i><span style="margin:0 .5px">:</span><span style="color:#cc1a1a">66.7%</span> <i>单率</i><span style="margin:0 .5px">:</span><span style="color:#cc1a1a">40%</span></div>
<div style="left:5px;top:389px;width:1028px;height:25px;background:#dbe3ed"></div>
<div style="left:25px;top:392px;width:100px;height:25px;font-weight:bold;color:#222222;line-height:25px;letter-spacing:0.5px"><b class=n><i>伊拉克</i>U23</b></div>
<div style="left:348px;top:392px;width:14px;height:25px;color:#222222;line-height:25px"><i>近</i></div>
<div style="left:364px;top:395px;width:37px;height:17px;background:#fff;border:1px solid #777;box-sizing:border-box;border-radius:3px;font-size:13px;line-height:15px;color:#000;font-family:'Liberation Serif',serif;padding-left:5px"><span style="position:relative;top:0px">10</span><svg width="10" height="7" style="position:absolute;right:4px;top:5px"><path d="M1 1.2 L5 5.2 L9 1.2" stroke="#000" stroke-width="2" fill="none"/></svg></div>
<div style="left:406px;top:392px;width:14px;height:25px;color:#222222;line-height:25px"><i>场</i></div>
<div style="left:422px;top:395px;width:13px;height:13px;background:#fff;border:1px solid #767676;border-radius:2px;box-sizing:border-box"></div>
<div style="left:438px;top:392px;width:30px;height:25px;color:#222222;line-height:25px"><i>同客</i></div>
<div style="left:467px;top:395px;width:13px;height:13px;background:#0b6ff0;border-radius:2px"><svg width="13" height="13" style="position:absolute;left:0;top:0"><path d="M2.7 6.6 L5.3 9.2 L10.6 3.2" stroke="#fff" stroke-width="2" fill="none"/></svg></div>
<div style="left:480px;top:392px;width:80px;height:25px;color:#222222;line-height:25px;white-space:nowrap"><i>奥运男足</i></div>
<div style="left:528px;top:395px;width:13px;height:13px;background:#0b6ff0;border-radius:2px"><svg width="13" height="13" style="position:absolute;left:0;top:0"><path d="M2.7 6.6 L5.3 9.2 L10.6 3.2" stroke="#fff" stroke-width="2" fill="none"/></svg></div>
<div style="left:541px;top:392px;width:80px;height:25px;color:#222222;line-height:25px;white-space:nowrap"><i>国际友谊</i></div>
<div style="left:588px;top:395px;width:13px;height:13px;background:#0b6ff0;border-radius:2px"><svg width="13" height="13" style="position:absolute;left:0;top:0"><path d="M2.7 6.6 L5.3 9.2 L10.6 3.2" stroke="#fff" stroke-width="2" fill="none"/></svg></div>
<div style="left:601px;top:392px;width:80px;height:25px;color:#222222;line-height:25px;white-space:nowrap"><i>亚青</i>U23</div>
<div style="left:647px;top:395px;width:13px;height:13px;background:#0b6ff0;border-radius:2px"><svg width="13" height="13" style="position:absolute;left:0;top:0"><path d="M2.7 6.6 L5.3 9.2 L10.6 3.2" stroke="#fff" stroke-width="2" fill="none"/></svg></div>
<div style="left:660px;top:392px;width:80px;height:25px;color:#222222;line-height:25px;white-space:nowrap"><i>西亚青锦</i></div>
<div style="left:708px;top:395px;width:13px;height:13px;background:#0b6ff0;border-radius:2px"><svg width="13" height="13" style="position:absolute;left:0;top:0"><path d="M2.7 6.6 L5.3 9.2 L10.6 3.2" stroke="#fff" stroke-width="2" fill="none"/></svg></div>
<div style="left:721px;top:392px;width:80px;height:25px;color:#222222;line-height:25px;white-space:nowrap"><i>球会友谊</i></div>
<div style="left:5px;top:414px;width:1028px;height:39px;background:#dbe3ed"></div>
<div style="left:6px;top:454px;width:80px;height:25px;background:#727200"></div>
<div style="left:87px;top:454px;width:73px;height:25px;background:#ffffff"></div>
<div style="left:161px;top:454px;width:154px;height:25px;background:#ffffff"></div>
<div style="left:316px;top:454px;width:87px;height:25px;background:#ffffff"></div>
<div style="left:404px;top:454px;width:36px;height:25px;background:#ffffff"></div>
<div style="left:441px;top:454px;width:85px;height:25px;background:#ffffff"></div>
<div style="left:527px;top:454px;width:49px;height:25px;background:#fdf9f6"></div>
<div style="left:577px;top:454px;width:77px;height:25px;background:#fdf9f6"></div>
<div style="left:655px;top:454px;width:51px;height:25px;background:#fdf9f6"></div>
<div style="left:707px;top:454px;width:63px;height:25px;background:#eef6fb"></div>
<div style="left:771px;top:454px;width:63px;height:25px;background:#eef6fb"></div>
<div style="left:835px;top:454px;width:65px;height:25px;background:#eef6fb"></div>
<div style="left:901px;top:454px;width:36px;height:25px;background:#ffffff"></div>
<div style="left:938px;top:454px;width:37px;height:25px;background:#ffffff"></div>
<div style="left:976px;top:454px;width:56px;height:25px;background:#ffffff"></div>
<div style="left:6px;top:480px;width:80px;height:25px;background:#4766c0"></div>
<div style="left:87px;top:480px;width:73px;height:25px;background:#efefef"></div>
<div style="left:161px;top:480px;width:154px;height:25px;background:#efefef"></div>
<div style="left:316px;top:480px;width:87px;height:25px;background:#efefef"></div>
<div style="left:404px;top:480px;width:36px;height:25px;background:#efefef"></div>
<div style="left:441px;top:480px;width:85px;height:25px;background:#efefef"></div>
<div style="left:527px;top:480px;width:49px;height:25px;background:#fdf9f6"></div>
<div style="left:577px;top:480px;width:77px;height:25px;background:#fdf9f6"></div>
<div style="left:655px;top:480px;width:51px;height:25px;background:#fdf9f6"></div>
<div style="left:707px;top:480px;width:63px;height:25px;background:#eef6fb"></div>
<div style="left:771px;top:480px;width:63px;height:25px;background:#eef6fb"></div>
<div style="left:835px;top:480px;width:65px;height:25px;background:#eef6fb"></div>
<div style="left:901px;top:480px;width:36px;height:25px;background:#efefef"></div>
<div style="left:938px;top:480px;width:37px;height:25px;background:#efefef"></div>
<div style="left:976px;top:480px;width:56px;height:25px;background:#efefef"></div>
<div style="left:6px;top:506px;width:80px;height:25px;background:#cc9e00"></div>
<div style="left:87px;top:506px;width:73px;height:25px;background:#ffffff"></div>
<div style="left:161px;top:506px;width:154px;height:25px;background:#ffffff"></div>
<div style="left:316px;top:506px;width:87px;height:25px;background:#ffffff"></div>
<div style="left:404px;top:506px;width:36px;height:25px;background:#ffffff"></div>
<div style="left:441px;top:506px;width:85px;height:25px;background:#ffffff"></div>
<div style="left:527px;top:506px;width:49px;height:25px;background:#fdf9f6"></div>
<div style="left:577px;top:506px;width:77px;height:25px;background:#fdf9f6"></div>
<div style="left:655px;top:506px;width:51px;height:25px;background:#fdf9f6"></div>
<div style="left:707px;top:506px;width:63px;height:25px;background:#eef6fb"></div>
<div style="left:771px;top:506px;width:63px;height:25px;background:#eef6fb"></div>
<div style="left:835px;top:506px;width:65px;height:25px;background:#eef6fb"></div>
<div style="left:901px;top:506px;width:36px;height:25px;background:#ffffff"></div>
<div style="left:938px;top:506px;width:37px;height:25px;background:#ffffff"></div>
<div style="left:976px;top:506px;width:56px;height:25px;background:#ffffff"></div>
<div style="left:6px;top:532px;width:80px;height:25px;background:#cc9e00"></div>
<div style="left:87px;top:532px;width:73px;height:25px;background:#efefef"></div>
<div style="left:161px;top:532px;width:154px;height:25px;background:#efefef"></div>
<div style="left:316px;top:532px;width:87px;height:25px;background:#efefef"></div>
<div style="left:404px;top:532px;width:36px;height:25px;background:#efefef"></div>
<div style="left:441px;top:532px;width:85px;height:25px;background:#efefef"></div>
<div style="left:527px;top:532px;width:49px;height:25px;background:#fdf9f6"></div>
<div style="left:577px;top:532px;width:77px;height:25px;background:#fdf9f6"></div>
<div style="left:655px;top:532px;width:51px;height:25px;background:#fdf9f6"></div>
<div style="left:707px;top:532px;width:63px;height:25px;background:#eef6fb"></div>
<div style="left:771px;top:532px;width:63px;height:25px;background:#eef6fb"></div>
<div style="left:835px;top:532px;width:65px;height:25px;background:#eef6fb"></div>
<div style="left:901px;top:532px;width:36px;height:25px;background:#efefef"></div>
<div style="left:938px;top:532px;width:37px;height:25px;background:#efefef"></div>
<div style="left:976px;top:532px;width:56px;height:25px;background:#efefef"></div>
<div style="left:6px;top:558px;width:80px;height:25px;background:#cc9e00"></div>
<div style="left:87px;top:558px;width:73px;height:25px;background:#ffffff"></div>
<div style="left:161px;top:558px;width:154px;height:25px;background:#ffffff"></div>
<div style="left:316px;top:558px;width:87px;height:25px;background:#ffffff"></div>
<div style="left:404px;top:558px;width:36px;height:25px;background:#ffffff"></div>
<div style="left:441px;top:558px;width:85px;height:25px;background:#ffffff"></div>
<div style="left:527px;top:558px;width:49px;height:25px;background:#fdf9f6"></div>
<div style="left:577px;top:558px;width:77px;height:25px;background:#fdf9f6"></div>
<div style="left:655px;top:558px;width:51px;height:25px;background:#fdf9f6"></div>
<div style="left:707px;top:558px;width:63px;height:25px;background:#eef6fb"></div>
<div style="left:771px;top:558px;width:63px;height:25px;background:#eef6fb"></div>
<div style="left:835px;top:558px;width:65px;height:25px;background:#eef6fb"></div>
<div style="left:901px;top:558px;width:36px;height:25px;background:#ffffff"></div>
<div style="left:938px;top:558px;width:37px;height:25px;background:#ffffff"></div>
<div style="left:976px;top:558px;width:56px;height:25px;background:#ffffff"></div>
<div style="left:6px;top:584px;width:80px;height:25px;background:#cc9e00"></div>
<div style="left:87px;top:584px;width:73px;height:25px;background:#efefef"></div>
<div style="left:161px;top:584px;width:154px;height:25px;background:#efefef"></div>
<div style="left:316px;top:584px;width:87px;height:25px;background:#efefef"></div>
<div style="left:404px;top:584px;width:36px;height:25px;background:#efefef"></div>
<div style="left:441px;top:584px;width:85px;height:25px;background:#efefef"></div>
<div style="left:527px;top:584px;width:49px;height:25px;background:#fdf9f6"></div>
<div style="left:577px;top:584px;width:77px;height:25px;background:#fdf9f6"></div>
<div style="left:655px;top:584px;width:51px;height:25px;background:#fdf9f6"></div>
<div style="left:707px;top:584px;width:63px;height:25px;background:#eef6fb"></div>
<div style="left:771px;top:584px;width:63px;height:25px;background:#eef6fb"></div>
<div style="left:835px;top:584px;width:65px;height:25px;background:#eef6fb"></div>
<div style="left:901px;top:584px;width:36px;height:25px;background:#efefef"></div>
<div style="left:938px;top:584px;width:37px;height:25px;background:#efefef"></div>
<div style="left:976px;top:584px;width:56px;height:25px;background:#efefef"></div>
<div style="left:6px;top:610px;width:80px;height:25px;background:#cc9e00"></div>
<div style="left:87px;top:610px;width:73px;height:25px;background:#ffffff"></div>
<div style="left:161px;top:610px;width:154px;height:25px;background:#ffffff"></div>
<div style="left:316px;top:610px;width:87px;height:25px;background:#ffffff"></div>
<div style="left:404px;top:610px;width:36px;height:25px;background:#ffffff"></div>
<div style="left:441px;top:610px;width:85px;height:25px;background:#ffffff"></div>
<div style="left:527px;top:610px;width:49px;height:25px;background:#fdf9f6"></div>
<div style="left:577px;top:610px;width:77px;height:25px;background:#fdf9f6"></div>
<div style="left:655px;top:610px;width:51px;height:25px;background:#fdf9f6"></div>
<div style="left:707px;top:610px;width:63px;height:25px;background:#eef6fb"></div>
<div style="left:771px;top:610px;width:63px;height:25px;background:#eef6fb"></div>
<div style="left:835px;top:610px;width:65px;height:25px;background:#eef6fb"></div>
<div style="left:901px;top:610px;width:36px;height:25px;background:#ffffff"></div>
<div style="left:938px;top:610px;width:37px;height:25px;background:#ffffff"></div>
<div style="left:976px;top:610px;width:56px;height:25px;background:#ffffff"></div>
<div style="left:6px;top:636px;width:80px;height:25px;background:#cc9e00"></div>
<div style="left:87px;top:636px;width:73px;height:25px;background:#efefef"></div>
<div style="left:161px;top:636px;width:154px;height:25px;background:#efefef"></div>
<div style="left:316px;top:636px;width:87px;height:25px;background:#efefef"></div>
<div style="left:404px;top:636px;width:36px;height:25px;background:#efefef"></div>
<div style="left:441px;top:636px;width:85px;height:25px;background:#efefef"></div>
<div style="left:527px;top:636px;width:49px;height:25px;background:#fdf9f6"></div>
<div style="left:577px;top:636px;width:77px;height:25px;background:#fdf9f6"></div>
<div style="left:655px;top:636px;width:51px;height:25px;background:#fdf9f6"></div>
<div style="left:707px;top:636px;width:63px;height:25px;background:#eef6fb"></div>
<div style="left:771px;top:636px;width:63px;height:25px;background:#eef6fb"></div>
<div style="left:835px;top:636px;width:65px;height:25px;background:#eef6fb"></div>
<div style="left:901px;top:636px;width:36px;height:25px;background:#efefef"></div>
<div style="left:938px;top:636px;width:37px;height:25px;background:#efefef"></div>
<div style="left:976px;top:636px;width:56px;height:25px;background:#efefef"></div>
<div style="left:6px;top:662px;width:80px;height:25px;background:#4766c0"></div>
<div style="left:87px;top:662px;width:73px;height:25px;background:#ffffff"></div>
<div style="left:161px;top:662px;width:154px;height:25px;background:#ffffff"></div>
<div style="left:316px;top:662px;width:87px;height:25px;background:#ffffff"></div>
<div style="left:404px;top:662px;width:36px;height:25px;background:#ffffff"></div>
<div style="left:441px;top:662px;width:85px;height:25px;background:#ffffff"></div>
<div style="left:527px;top:662px;width:49px;height:25px;background:#fdf9f6"></div>
<div style="left:577px;top:662px;width:77px;height:25px;background:#fdf9f6"></div>
<div style="left:655px;top:662px;width:51px;height:25px;background:#fdf9f6"></div>
<div style="left:707px;top:662px;width:63px;height:25px;background:#eef6fb"></div>
<div style="left:771px;top:662px;width:63px;height:25px;background:#eef6fb"></div>
<div style="left:835px;top:662px;width:65px;height:25px;background:#eef6fb"></div>
<div style="left:901px;top:662px;width:36px;height:25px;background:#ffffff"></div>
<div style="left:938px;top:662px;width:37px;height:25px;background:#ffffff"></div>
<div style="left:976px;top:662px;width:56px;height:25px;background:#ffffff"></div>
<div style="left:6px;top:688px;width:80px;height:25px;background:#ff8312"></div>
<div style="left:87px;top:688px;width:73px;height:25px;background:#efefef"></div>
<div style="left:161px;top:688px;width:154px;height:25px;background:#efefef"></div>
<div style="left:316px;top:688px;width:87px;height:25px;background:#efefef"></div>
<div style="left:404px;top:688px;width:36px;height:25px;background:#efefef"></div>
<div style="left:441px;top:688px;width:85px;height:25px;background:#efefef"></div>
<div style="left:527px;top:688px;width:49px;height:25px;background:#fdf9f6"></div>
<div style="left:577px;top:688px;width:77px;height:25px;background:#fdf9f6"></div>
<div style="left:655px;top:688px;width:51px;height:25px;background:#fdf9f6"></div>
<div style="left:707px;top:688px;width:63px;height:25px;background:#eef6fb"></div>
<div style="left:771px;top:688px;width:63px;height:25px;background:#eef6fb"></div>
<div style="left:835px;top:688px;width:65px;height:25px;background:#eef6fb"></div>
<div style="left:901px;top:688px;width:36px;height:25px;background:#efefef"></div>
<div style="left:938px;top:688px;width:37px;height:25px;background:#efefef"></div>
<div style="left:976px;top:688px;width:56px;height:25px;background:#efefef"></div>
<div style="left:5px;top:713px;width:1028px;height:27px;background:#fff"></div>
<div style="left:5px;top:414px;width:1028px;height:1px;background:#bbbbbb"></div>
<div style="left:526px;top:434px;width:507px;height:1px;background:#bbbbbb"></div>
<div style="left:5px;top:453px;width:1028px;height:1px;background:#bbbbbb"></div>
<div style="left:5px;top:479px;width:1028px;height:1px;background:#bbbbbb"></div>
<div style="left:5px;top:505px;width:1028px;height:1px;background:#bbbbbb"></div>
<div style="left:5px;top:531px;width:1028px;height:1px;background:#bbbbbb"></div>
<div style="left:5px;top:557px;width:1028px;height:1px;background:#bbbbbb"></div>
<div style="left:5px;top:583px;width:1028px;height:1px;background:#bbbbbb"></div>
<div style="left:5px;top:609px;width:1028px;height:1px;background:#bbbbbb"></div>
<div style="left:5px;top:635px;width:1028px;height:1px;background:#bbbbbb"></div>
<div style="left:5px;top:661px;width:1028px;height:1px;background:#bbbbbb"></div>
<div style="left:5px;top:687px;width:1028px;height:1px;background:#bbbbbb"></div>
<div style="left:5px;top:713px;width:1028px;height:1px;background:#bbbbbb"></div>
<div style="left:5px;top:739px;width:1028px;height:1px;background:#bbbbbb"></div>
<div style="left:5px;top:414px;width:1px;height:326px;background:#bbbbbb"></div>
<div style="left:86px;top:414px;width:1px;height:300px;background:#bbbbbb"></div>
<div style="left:160px;top:414px;width:1px;height:300px;background:#bbbbbb"></div>
<div style="left:315px;top:414px;width:1px;height:300px;background:#bbbbbb"></div>
<div style="left:403px;top:414px;width:1px;height:300px;background:#bbbbbb"></div>
<div style="left:440px;top:414px;width:1px;height:300px;background:#bbbbbb"></div>
<div style="left:526px;top:414px;width:1px;height:300px;background:#bbbbbb"></div>
<div style="left:576px;top:434px;width:1px;height:280px;background:#bbbbbb"></div>
<div style="left:654px;top:434px;width:1px;height:280px;background:#bbbbbb"></div>
<div style="left:706px;top:414px;width:1px;height:300px;background:#bbbbbb"></div>
<div style="left:770px;top:434px;width:1px;height:280px;background:#bbbbbb"></div>
<div style="left:834px;top:434px;width:1px;height:280px;background:#bbbbbb"></div>
<div style="left:900px;top:414px;width:1px;height:300px;background:#bbbbbb"></div>
<div style="left:937px;top:434px;width:1px;height:280px;background:#bbbbbb"></div>
<div style="left:975px;top:434px;width:1px;height:280px;background:#bbbbbb"></div>
<div style="left:1032px;top:414px;width:1px;height:326px;background:#bbbbbb"></div>
<div style="left:6px;top:479px;width:80px;height:1px;background:#b6bdb7"></div>
<div style="left:6px;top:505px;width:80px;height:1px;background:#cac7b7"></div>
<div style="left:6px;top:531px;width:80px;height:1px;background:#e8d38c"></div>
<div style="left:6px;top:557px;width:80px;height:1px;background:#e8d38c"></div>
<div style="left:6px;top:583px;width:80px;height:1px;background:#e8d38c"></div>
<div style="left:6px;top:609px;width:80px;height:1px;background:#e8d38c"></div>
<div style="left:6px;top:635px;width:80px;height:1px;background:#e8d38c"></div>
<div style="left:6px;top:661px;width:80px;height:1px;background:#cac7b7"></div>
<div style="left:6px;top:687px;width:80px;height:1px;background:#d6c1bc"></div>
<div style="left:6px;top:415px;width:80px;height:38px;line-height:39px;text-align:center;color:#333"><i>类型</i></div>
<div style="left:87px;top:415px;width:73px;height:38px;line-height:39px;text-align:center;color:#333"><i>日期</i></div>
<div style="left:161px;top:415px;width:154px;height:38px;line-height:39px;text-align:center;color:#333"><i>主场</i></div>
<div style="left:316px;top:415px;width:87px;height:38px;line-height:39px;text-align:center;color:#333"><i>比分</i>(<i>半场</i>)</div>
<div style="left:404px;top:415px;width:36px;height:38px;line-height:39px;text-align:center;color:#333"><i>角球</i></div>
<div style="left:441px;top:415px;width:85px;height:38px;line-height:39px;text-align:center;color:#333"><i>客场</i></div>
<div style="left:527px;top:436px;width:49px;height:17px;line-height:18px;text-align:center;color:#333"><i>主</i></div>
<div style="left:577px;top:436px;width:77px;height:17px;line-height:18px;text-align:center;color:#333"><i>让球</i></div>
<div style="left:655px;top:436px;width:51px;height:17px;line-height:18px;text-align:center;color:#333"><i>客</i></div>
<div style="left:707px;top:436px;width:63px;height:17px;line-height:18px;text-align:center;color:#333"><i>主</i></div>
<div style="left:771px;top:436px;width:63px;height:17px;line-height:18px;text-align:center;color:#333"><i>和</i></div>
<div style="left:835px;top:436px;width:65px;height:17px;line-height:18px;text-align:center;color:#333"><i>客</i></div>
<div style="left:901px;top:436px;width:36px;height:17px;line-height:18px;text-align:center;color:#333"><i>胜负</i></div>
<div style="left:938px;top:436px;width:37px;height:17px;line-height:18px;text-align:center;color:#333"><i>让球</i></div>
<div style="left:976px;top:436px;width:56px;height:17px;line-height:18px;text-align:center;color:#333"><i>进球数</i></div>
<div style="left:557px;top:415px;width:60px;height:18px;background:#fff;border:1px solid #777;box-sizing:border-box;font-size:13px;line-height:16px;color:#000;padding-left:4px"><span style="position:relative;top:1px">Crow*</span><svg width="10" height="7" style="position:absolute;right:4px;top:5px"><path d="M1 1.2 L5 5.2 L9 1.2" stroke="#000" stroke-width="2" fill="none"/></svg></div>
<div style="left:625px;top:415px;width:50px;height:18px;background:#fff;border:1px solid #777;box-sizing:border-box;font-size:13px;line-height:16px;color:#000;padding-left:4px"><span style="position:relative;top:1px"><i>终指</i></span><svg width="10" height="7" style="position:absolute;right:4px;top:5px"><path d="M1 1.2 L5 5.2 L9 1.2" stroke="#000" stroke-width="2" fill="none"/></svg></div>
<div style="left:740px;top:415px;width:68px;height:18px;background:#fff;border:1px solid #777;box-sizing:border-box;font-size:13px;line-height:16px;color:#000;padding-left:4px"><span style="position:relative;top:1px"><i>平均值</i></span><svg width="10" height="7" style="position:absolute;right:4px;top:5px"><path d="M1 1.2 L5 5.2 L9 1.2" stroke="#000" stroke-width="2" fill="none"/></svg></div>
<div style="left:816px;top:415px;width:50px;height:18px;background:#fff;border:1px solid #777;box-sizing:border-box;font-size:13px;line-height:16px;color:#000;padding-left:4px"><span style="position:relative;top:1px"><i>终指</i></span><svg width="10" height="7" style="position:absolute;right:4px;top:5px"><path d="M1 1.2 L5 5.2 L9 1.2" stroke="#000" stroke-width="2" fill="none"/></svg></div>
<div style="left:941px;top:415px;width:50px;height:18px;background:#fff;border:1px solid #777;box-sizing:border-box;font-size:13px;line-height:16px;color:#000;padding-left:4px"><span style="position:relative;top:1px"><i>全场</i></span><svg width="10" height="7" style="position:absolute;right:4px;top:5px"><path d="M1 1.2 L5 5.2 L9 1.2" stroke="#000" stroke-width="2" fill="none"/></svg></div>
<div style="left:6px;top:454px;width:80px;height:25px;line-height:26px;text-align:center;color:#fff"><b class=w><i>奥运男足</i></b></div>
<div style="left:87px;top:454px;width:73px;height:25px;line-height:26px;text-align:center;color:#222222">24-07-25</div>
<div style="left:161px;top:454px;width:154px;height:25px;line-height:26px;text-align:center;color:#222222"><span style="color:#16701f"><i>伊拉克</i>U23(<i>中</i>)</span></div>
<div style="left:316px;top:454px;width:87px;height:25px;line-height:26px;text-align:center;color:#222222"><span style="color:#cc1a1a">2-1</span>(0-0)</div>
<div style="left:404px;top:454px;width:36px;height:25px;line-height:26px;text-align:center;color:#222222">2-3</div>
<div style="left:441px;top:454px;width:85px;height:25px;line-height:26px;text-align:center;color:#222222"><i>乌克兰</i>U23</div>
<div style="left:527px;top:454px;width:49px;height:25px;line-height:26px;text-align:center;color:#222222">0.93</div>
<div style="left:577px;top:454px;width:77px;height:25px;line-height:26px;text-align:center;color:#222222"><i>受半球</i></div>
<div style="left:655px;top:454px;width:51px;height:25px;line-height:26px;text-align:center;color:#222222">0.96</div>
<div style="left:707px;top:454px;width:63px;height:25px;line-height:26px;text-align:center;color:#222222">4.41</div>
<div style="left:771px;top:454px;width:63px;height:25px;line-height:26px;text-align:center;color:#222222">3.42</div>
<div style="left:835px;top:454px;width:65px;height:25px;line-height:26px;text-align:center;color:#222222">1.80</div>
<div style="left:901px;top:454px;width:36px;height:25px;line-height:26px;text-align:center;color:#cc1a1a"><i>胜</i></div>
<div style="left:938px;top:454px;width:37px;height:25px;line-height:26px;text-align:center;color:#cc3300"><i>赢</i></div>
<div style="left:976px;top:454px;width:56px;height:25px;line-height:26px;text-align:center;color:#cc1a1a"><i>大</i></div>
<div style="left:6px;top:480px;width:80px;height:25px;line-height:26px;text-align:center;color:#fff"><b class=w><i>国际友谊</i></b></div>
<div style="left:87px;top:480px;width:73px;height:25px;line-height:26px;text-align:center;color:#222222">24-07-17</div>
<div style="left:161px;top:480px;width:154px;height:25px;line-height:26px;text-align:center;color:#222222"><i>埃及</i>U23(<i>中</i>)</div>
<div style="left:316px;top:480px;width:87px;height:25px;line-height:26px;text-align:center;color:#222222"><span style="color:#cc1a1a">2-1</span>(1-0)</div>
<div style="left:404px;top:480px;width:36px;height:25px;line-height:26px;text-align:center;color:#222222">0-0</div>
<div style="left:441px;top:480px;width:85px;height:25px;line-height:26px;text-align:center;color:#222222"><span style="color:#16701f"><i>伊拉克</i>U23</span></div>
<div style="left:527px;top:480px;width:49px;height:25px;line-height:26px;text-align:center;color:#222222"></div>
<div style="left:577px;top:480px;width:77px;height:25px;line-height:26px;text-align:center;color:#222222"></div>
<div style="left:655px;top:480px;width:51px;height:25px;line-height:26px;text-align:center;color:#222222"></div>
<div style="left:707px;top:480px;width:63px;height:25px;line-height:26px;text-align:center;color:#222222"></div>
<div style="left:771px;top:480px;width:63px;height:25px;line-height:26px;text-align:center;color:#222222"></div>
<div style="left:835px;top:480px;width:65px;height:25px;line-height:26px;text-align:center;color:#222222"></div>
<div style="left:901px;top:480px;width:36px;height:25px;line-height:26px;text-align:center;color:#2222aa"><i>负</i></div>
<div style="left:938px;top:480px;width:37px;height:25px;line-height:26px;text-align:center;color:#222222"></div>
<div style="left:976px;top:480px;width:56px;height:25px;line-height:26px;text-align:center;color:#222222"></div>
<div style="left:6px;top:506px;width:80px;height:25px;line-height:26px;text-align:center;color:#fff"><b class=w><i>亚青</i>U23</b></div>
<div style="left:87px;top:506px;width:73px;height:25px;line-height:26px;text-align:center;color:#222222">24-05-02</div>
<div style="left:161px;top:506px;width:154px;height:25px;line-height:26px;text-align:center;color:#222222"><span style="color:#16701f"><i>伊拉克</i>U23(<i>中</i>)</span></div>
<div style="left:316px;top:506px;width:87px;height:25px;line-height:26px;text-align:center;color:#222222"><span style="color:#cc1a1a">1-1</span>(1-1)</div>
<div style="left:404px;top:506px;width:36px;height:25px;line-height:26px;text-align:center;color:#222222">4-4</div>
<div style="left:441px;top:506px;width:85px;height:25px;line-height:26px;text-align:center;color:#222222"><i>印尼</i>U23</div>
<div style="left:527px;top:506px;width:49px;height:25px;line-height:26px;text-align:center;color:#222222">0.97</div>
<div style="left:577px;top:506px;width:77px;height:25px;line-height:26px;text-align:center;color:#222222"><i>平</i>/<i>半</i></div>
<div style="left:655px;top:506px;width:51px;height:25px;line-height:26px;text-align:center;color:#222222">0.85</div>
<div style="left:707px;top:506px;width:63px;height:25px;line-height:26px;text-align:center;color:#222222">2.31</div>
<div style="left:771px;top:506px;width:63px;height:25px;line-height:26px;text-align:center;color:#222222">3.27</div>
<div style="left:835px;top:506px;width:65px;height:25px;line-height:26px;text-align:center;color:#222222">2.78</div>
<div style="left:901px;top:506px;width:36px;height:25px;line-height:26px;text-align:center;color:#228822"><i>平</i></div>
<div style="left:938px;top:506px;width:37px;height:25px;line-height:26px;text-align:center;color:#1a1acc"><i>输</i></div>
<div style="left:976px;top:506px;width:56px;height:25px;line-height:26px;text-align:center;color:#2222aa"><i>小</i></div>
<div style="left:6px;top:532px;width:80px;height:25px;line-height:26px;text-align:center;color:#fff"><b class=w><i>亚青</i>U23</b></div>
<div style="left:87px;top:532px;width:73px;height:25px;line-height:26px;text-align:center;color:#222222">24-04-30</div>
<div style="left:161px;top:532px;width:154px;height:25px;line-height:26px;text-align:center;color:#222222"><i>日本</i>U23(<i>中</i>)</div>
<div style="left:316px;top:532px;width:87px;height:25px;line-height:26px;text-align:center;color:#222222"><span style="color:#cc1a1a">2-0</span>(2-0)</div>
<div style="left:404px;top:532px;width:36px;height:25px;line-height:26px;text-align:center;color:#222222">5-4</div>
<div style="left:441px;top:532px;width:85px;height:25px;line-height:26px;text-align:center;color:#222222"><span style="color:#16701f"><i>伊拉克</i>U23</span></div>
<div style="left:527px;top:532px;width:49px;height:25px;line-height:26px;text-align:center;color:#222222">0.95</div>
<div style="left:577px;top:532px;width:77px;height:25px;line-height:26px;text-align:center;color:#222222"><span style="color:#cc5522;text-decoration:underline"><i>半</i>/<i>一</i></span></div>
<div style="left:655px;top:532px;width:51px;height:25px;line-height:26px;text-align:center;color:#222222">0.87</div>
<div style="left:707px;top:532px;width:63px;height:25px;line-height:26px;text-align:center;color:#222222">1.63</div>
<div style="left:771px;top:532px;width:63px;height:25px;line-height:26px;text-align:center;color:#222222">3.48</div>
<div style="left:835px;top:532px;width:65px;height:25px;line-height:26px;text-align:center;color:#222222">5.00</div>
<div style="left:901px;top:532px;width:36px;height:25px;line-height:26px;text-align:center;color:#2222aa"><i>负</i></div>
<div style="left:938px;top:532px;width:37px;height:25px;line-height:26px;text-align:center;color:#1a1acc"><i>输</i></div>
<div style="left:976px;top:532px;width:56px;height:25px;line-height:26px;text-align:center;color:#2222aa"><i>小</i></div>
<div style="left:6px;top:558px;width:80px;height:25px;line-height:26px;text-align:center;color:#fff"><b class=w><i>亚青</i>U23</b></div>
<div style="left:87px;top:558px;width:73px;height:25px;line-height:26px;text-align:center;color:#222222">24-04-27</div>
<div style="left:161px;top:558px;width:154px;height:25px;line-height:26px;text-align:center;color:#222222"><span style="color:#16701f"><i>伊拉克</i>U23(<i>中</i>)</span></div>
<div style="left:316px;top:558px;width:87px;height:25px;line-height:26px;text-align:center;color:#222222"><span style="color:#cc1a1a">1-0</span>(0-0)</div>
<div style="left:404px;top:558px;width:36px;height:25px;line-height:26px;text-align:center;color:#222222">8-4</div>
<div style="left:441px;top:558px;width:85px;height:25px;line-height:26px;text-align:center;color:#222222"><i>越南</i>U23<span class="bd">1</span></div>
<div style="left:527px;top:558px;width:49px;height:25px;line-height:26px;text-align:center;color:#222222">0.84</div>
<div style="left:577px;top:558px;width:77px;height:25px;line-height:26px;text-align:center;color:#222222"><i>一球</i></div>
<div style="left:655px;top:558px;width:51px;height:25px;line-height:26px;text-align:center;color:#222222">0.98</div>
<div style="left:707px;top:558px;width:63px;height:25px;line-height:26px;text-align:center;color:#222222">1.52</div>
<div style="left:771px;top:558px;width:63px;height:25px;line-height:26px;text-align:center;color:#222222">3.79</div>
<div style="left:835px;top:558px;width:65px;height:25px;line-height:26px;text-align:center;color:#222222">5.70</div>
<div style="left:901px;top:558px;width:36px;height:25px;line-height:26px;text-align:center;color:#cc1a1a"><i>胜</i></div>
<div style="left:938px;top:558px;width:37px;height:25px;line-height:26px;text-align:center;color:#228822"><i>走</i></div>
<div style="left:976px;top:558px;width:56px;height:25px;line-height:26px;text-align:center;color:#2222aa"><i>小</i></div>
<div style="left:6px;top:584px;width:80px;height:25px;line-height:26px;text-align:center;color:#fff"><b class=w><i>亚青</i>U23</b></div>
<div style="left:87px;top:584px;width:73px;height:25px;line-height:26px;text-align:center;color:#222222">24-04-22</div>
<div style="left:161px;top:584px;width:154px;height:25px;line-height:26px;text-align:center;color:#222222"><i>沙特阿拉伯</i>U23(<i>中</i>)</div>
<div style="left:316px;top:584px;width:87px;height:25px;line-height:26px;text-align:center;color:#222222"><span style="color:#cc1a1a">1-2</span>(1-1)</div>
<div style="left:404px;top:584px;width:36px;height:25px;line-height:26px;text-align:center;color:#222222">2-5</div>
<div style="left:441px;top:584px;width:85px;height:25px;line-height:26px;text-align:center;color:#222222"><span style="color:#16701f"><i>伊拉克</i>U23</span></div>
<div style="left:527px;top:584px;width:49px;height:25px;line-height:26px;text-align:center;color:#222222">0.85</div>
<div style="left:577px;top:584px;width:77px;height:25px;line-height:26px;text-align:center;color:#222222"><i>平</i>/<i>半</i></div>
<div style="left:655px;top:584px;width:51px;height:25px;line-height:26px;text-align:center;color:#222222">0.97</div>
<div style="left:707px;top:584px;width:63px;height:25px;line-height:26px;text-align:center;color:#222222">2.08</div>
<div style="left:771px;top:584px;width:63px;height:25px;line-height:26px;text-align:center;color:#222222">3.37</div>
<div style="left:835px;top:584px;width:65px;height:25px;line-height:26px;text-align:center;color:#222222">3.11</div>
<div style="left:901px;top:584px;width:36px;height:25px;line-height:26px;text-align:center;color:#cc1a1a"><i>胜</i></div>
<div style="left:938px;top:584px;width:37px;height:25px;line-height:26px;text-align:center;color:#cc3300"><i>赢</i></div>
<div style="left:976px;top:584px;width:56px;height:25px;line-height:26px;text-align:center;color:#cc1a1a"><i>大</i></div>
<div style="left:6px;top:610px;width:80px;height:25px;line-height:26px;text-align:center;color:#fff"><b class=w><i>亚青</i>U23</b></div>
<div style="left:87px;top:610px;width:73px;height:25px;line-height:26px;text-align:center;color:#222222">24-04-20</div>
<div style="left:161px;top:610px;width:154px;height:25px;line-height:26px;text-align:center;color:#222222"><i>塔吉克斯坦</i>U23(<i>中</i>)</div>
<div style="left:316px;top:610px;width:87px;height:25px;line-height:26px;text-align:center;color:#222222"><span style="color:#cc1a1a">2-4</span>(1-2)</div>
<div style="left:404px;top:610px;width:36px;height:25px;line-height:26px;text-align:center;color:#222222">7-3</div>
<div style="left:441px;top:610px;width:85px;height:25px;line-height:26px;text-align:center;color:#222222"><span style="color:#16701f"><i>伊拉克</i>U23</span></div>
<div style="left:527px;top:610px;width:49px;height:25px;line-height:26px;text-align:center;color:#222222">0.94</div>
<div style="left:577px;top:610px;width:77px;height:25px;line-height:26px;text-align:center;color:#222222"><i>受半球</i></div>
<div style="left:655px;top:610px;width:51px;height:25px;line-height:26px;text-align:center;color:#222222">0.88</div>
<div style="left:707px;top:610px;width:63px;height:25px;line-height:26px;text-align:center;color:#222222">4.65</div>
<div style="left:771px;top:610px;width:63px;height:25px;line-height:26px;text-align:center;color:#222222">3.69</div>
<div style="left:835px;top:610px;width:65px;height:25px;line-height:26px;text-align:center;color:#222222">1.65</div>
<div style="left:901px;top:610px;width:36px;height:25px;line-height:26px;text-align:center;color:#cc1a1a"><i>胜</i></div>
<div style="left:938px;top:610px;width:37px;height:25px;line-height:26px;text-align:center;color:#cc3300"><i>赢</i></div>
<div style="left:976px;top:610px;width:56px;height:25px;line-height:26px;text-align:center;color:#cc1a1a"><i>大</i></div>
<div style="left:6px;top:636px;width:80px;height:25px;line-height:26px;text-align:center;color:#fff"><b class=w><i>亚青</i>U23</b></div>
<div style="left:87px;top:636px;width:73px;height:25px;line-height:26px;text-align:center;color:#222222">24-04-16</div>
<div style="left:161px;top:636px;width:154px;height:25px;line-height:26px;text-align:center;color:#222222"><span class="bd">1</span><span style="color:#16701f"><i>伊拉克</i>U23(<i>中</i>)</span></div>
<div style="left:316px;top:636px;width:87px;height:25px;line-height:26px;text-align:center;color:#222222"><span style="color:#cc1a1a">0-2</span>(0-1)</div>
<div style="left:404px;top:636px;width:36px;height:25px;line-height:26px;text-align:center;color:#222222">7-4</div>
<div style="left:441px;top:636px;width:85px;height:25px;line-height:26px;text-align:center;color:#222222"><i>泰国</i>U23</div>
<div style="left:527px;top:636px;width:49px;height:25px;line-height:26px;text-align:center;color:#222222">0.82</div>
<div style="left:577px;top:636px;width:77px;height:25px;line-height:26px;text-align:center;color:#222222"><i>半</i>/<i>一</i></div>
<div style="left:655px;top:636px;width:51px;height:25px;line-height:26px;text-align:center;color:#222222">1.00</div>
<div style="left:707px;top:636px;width:63px;height:25px;line-height:26px;text-align:center;color:#222222">1.55</div>
<div style="left:771px;top:636px;width:63px;height:25px;line-height:26px;text-align:center;color:#222222">3.69</div>
<div style="left:835px;top:636px;width:65px;height:25px;line-height:26px;text-align:center;color:#222222">5.54</div>
<div style="left:901px;top:636px;width:36px;height:25px;line-height:26px;text-align:center;color:#2222aa"><i>负</i></div>
<div style="left:938px;top:636px;width:37px;height:25px;line-height:26px;text-align:center;color:#1a1acc"><i>输</i></div>
<div style="left:976px;top:636px;width:56px;height:25px;line-height:26px;text-align:center;color:#2222aa"><i>小</i></div>
<div style="left:6px;top:662px;width:80px;height:25px;line-height:26px;text-align:center;color:#fff"><b class=w><i>国际友谊</i></b></div>
<div style="left:87px;top:662px;width:73px;height:25px;line-height:26px;text-align:center;color:#222222">24-04-11</div>
<div style="left:161px;top:662px;width:154px;height:25px;line-height:26px;text-align:center;color:#222222"><i>日本</i>U23</div>
<div style="left:316px;top:662px;width:87px;height:25px;line-height:26px;text-align:center;color:#222222"><span style="color:#cc1a1a">1-0</span>(0-0)</div>
<div style="left:404px;top:662px;width:36px;height:25px;line-height:26px;text-align:center;color:#222222">0-0</div>
<div style="left:441px;top:662px;width:85px;height:25px;line-height:26px;text-align:center;color:#222222"><span style="color:#16701f"><i>伊拉克</i>U23</span></div>
<div style="left:527px;top:662px;width:49px;height:25px;line-height:26px;text-align:center;color:#222222"></div>
<div style="left:577px;top:662px;width:77px;height:25px;line-height:26px;text-align:center;color:#222222"></div>
<div style="left:655px;top:662px;width:51px;height:25px;line-height:26px;text-align:center;color:#222222"></div>
<div style="left:707px;top:662px;width:63px;height:25px;line-height:26px;text-align:center;color:#222222"></div>
<div style="left:771px;top:662px;width:63px;height:25px;line-height:26px;text-align:center;color:#222222"></div>
<div style="left:835px;top:662px;width:65px;height:25px;line-height:26px;text-align:center;color:#222222"></div>
<div style="left:901px;top:662px;width:36px;height:25px;line-height:26px;text-align:center;color:#2222aa"><i>负</i></div>
<div style="left:938px;top:662px;width:37px;height:25px;line-height:26px;text-align:center;color:#222222"></div>
<div style="left:976px;top:662px;width:56px;height:25px;line-height:26px;text-align:center;color:#222222"></div>
<div style="left:6px;top:688px;width:80px;height:25px;line-height:26px;text-align:center;color:#fff"><b class=w><i>西亚青锦</i></b></div>
<div style="left:87px;top:688px;width:73px;height:25px;line-height:26px;text-align:center;color:#222222">24-03-27</div>
<div style="left:161px;top:688px;width:154px;height:25px;line-height:26px;text-align:center;color:#222222"><span style="color:#16701f"><i>伊拉克</i>U23(<i>中</i>)</span></div>
<div style="left:316px;top:688px;width:87px;height:25px;line-height:26px;text-align:center;color:#222222"><span style="color:#cc1a1a">1-3</span>(1-1)</div>
<div style="left:404px;top:688px;width:36px;height:25px;line-height:26px;text-align:center;color:#222222">0-0</div>
<div style="left:441px;top:688px;width:85px;height:25px;line-height:26px;text-align:center;color:#222222"><i>约旦</i>U23</div>
<div style="left:527px;top:688px;width:49px;height:25px;line-height:26px;text-align:center;color:#222222">1.01</div>
<div style="left:577px;top:688px;width:77px;height:25px;line-height:26px;text-align:center;color:#222222"><i>平手</i></div>
<div style="left:655px;top:688px;width:51px;height:25px;line-height:26px;text-align:center;color:#222222">0.81</div>
<div style="left:707px;top:688px;width:63px;height:25px;line-height:26px;text-align:center;color:#222222">2.70</div>
<div style="left:771px;top:688px;width:63px;height:25px;line-height:26px;text-align:center;color:#222222">3.07</div>
<div style="left:835px;top:688px;width:65px;height:25px;line-height:26px;text-align:center;color:#222222">2.44</div>
<div style="left:901px;top:688px;width:36px;height:25px;line-height:26px;text-align:center;color:#2222aa"><i>负</i></div>
<div style="left:938px;top:688px;width:37px;height:25px;line-height:26px;text-align:center;color:#1a1acc"><i>输</i></div>
<div style="left:976px;top:688px;width:56px;height:25px;line-height:26px;text-align:center;color:#cc1a1a"><i>大</i></div>
<div style="left:6px;top:714px;width:1026px;height:25px;line-height:26px;text-align:center;color:#222222;word-spacing:1px"><i>近</i><span style="color:#cc1a1a">10</span><i>场</i>,<i>胜</i>4<i>平</i>1<i>负</i>5, <i>胜率</i><span style="margin:0 .5px">:</span><span style="color:#cc1a1a">40%</span> <i>让胜率</i><span style="margin:0 .5px">:</span><span style="color:#cc1a1a">37.5%</span> <i>大率</i><span style="margin:0 .5px">:</span><span style="color:#cc1a1a">50%</span> <i>单率</i><span style="margin:0 .5px">:</span><span style="color:#cc1a1a">50%</span></div>
</body></html>
